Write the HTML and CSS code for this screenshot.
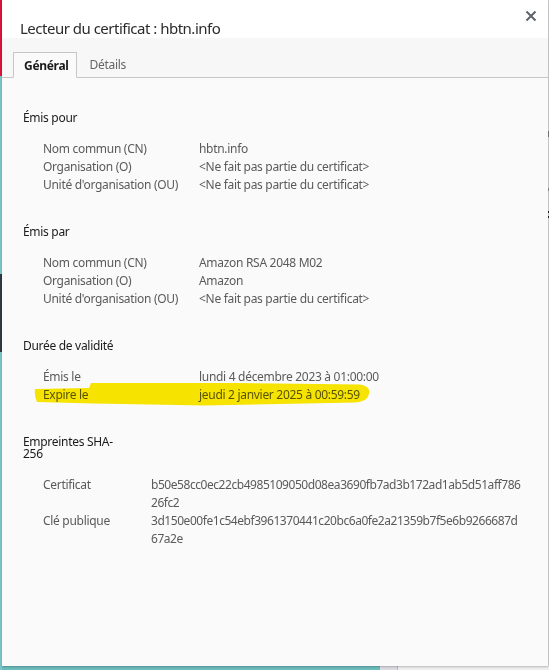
FILE: index.html
```html
<!DOCTYPE html>
<html lang="fr">
<head>
<meta charset="utf-8">
<title>Lecteur du certificat</title>
<link rel="stylesheet" href="styles.css">
</head>
<body>
<div class="backdrop">
  <div class="dialog">
    <header class="titlebar">
      <h1 class="title">Lecteur du certificat : hbtn.info</h1>
      <button class="close" aria-label="Fermer">
        <svg width="12" height="12" viewBox="0 0 12 12"><path d="M1.5 1.5 L10.5 10.5 M10.5 1.5 L1.5 10.5" stroke="#5f6368" stroke-width="2" fill="none"/></svg>
      </button>
    </header>
    <nav class="tabs">
      <span class="tab tab-active">Général</span>
      <span class="tab">Détails</span>
      <span class="tab-fill"></span>
    </nav>
    <main class="content">
      <section class="group">
        <h2 class="heading">Émis pour</h2>
        <div class="fields">
          <span class="label">Nom commun (CN)</span><span class="value">hbtn.info</span>
          <span class="label">Organisation (O)</span><span class="value">&lt;Ne fait pas partie du certificat&gt;</span>
          <span class="label">Unité d'organisation (OU)</span><span class="value">&lt;Ne fait pas partie du certificat&gt;</span>
        </div>
      </section>
      <section class="group">
        <h2 class="heading">Émis par</h2>
        <div class="fields">
          <span class="label">Nom commun (CN)</span><span class="value">Amazon RSA 2048 M02</span>
          <span class="label">Organisation (O)</span><span class="value">Amazon</span>
          <span class="label">Unité d'organisation (OU)</span><span class="value">&lt;Ne fait pas partie du certificat&gt;</span>
        </div>
      </section>
      <section class="group">
        <h2 class="heading">Durée de validité</h2>
        <div class="fields marked">
          <span class="label">Émis le</span><span class="value">lundi 4 décembre 2023 à 01:00:00</span>
          <span class="label">Expire le</span><span class="value">jeudi 2 janvier 2025 à 00:59:59</span>
          <svg class="highlight" width="338" height="26" viewBox="0 0 338 26"><path d="M1 8 L55 7 L57 2 L200 2 L326 3.5 Q337 5 335 13 Q333 21 321 21.5 L170 24.5 L60 22.5 L3 21 Q0 15 1 8 Z" fill="#fbe900"/></svg>
        </div>
      </section>
      <section class="group">
        <h2 class="heading heading-wrap">Empreintes SHA-<br>256</h2>
        <div class="fields fields-hash">
          <span class="label">Certificat</span><span class="value hash">b50e58cc0ec22cb4985109050d08ea3690fb7ad3b172ad1ab5d51aff786<br>26fc2</span>
          <span class="label">Clé publique</span><span class="value hash">3d150e00fe1c54ebf3961370441c20bc6a0fe2a21359b7f5e6b9266687d<br>67a2e</span>
        </div>
      </section>
    </main>
  </div>
</div>
</body>
</html>
```

FILE: styles.css
```css
* { box-sizing: border-box; }
html, body { margin: 0; padding: 0; }
body {
  width: 549px;
  height: 670px;
  overflow: hidden;
  font-family: "Segoe UI", "Noto Sans", sans-serif;
  font-size: 12px;
  letter-spacing: -0.3px;
  background: #ececec;
}
.backdrop {
  width: 549px;
  height: 670px;
  padding: 0 1px 4px 2px;
  background:
    linear-gradient(#d8143f, #d8143f) 0 0 / 2px 76px no-repeat,
    linear-gradient(#2f3a44, #2f3a44) 0 274px / 2px 78px no-repeat,
    linear-gradient(#7cc7c9, #7cc7c9) 0 76px / 2px 100% no-repeat,
    linear-gradient(#6dbcbd, #6dbcbd) 0 666px / 380px 4px no-repeat,
    linear-gradient(#dcdce4, #dcdce4) 380px 666px / 17px 4px no-repeat,
    linear-gradient(#b8b8c8, #b8b8c8) 397px 666px / 1px 4px no-repeat,
    linear-gradient(#8a8a8a, #8a8a8a) 548px 131px / 1px 6px no-repeat,
    linear-gradient(#9a9a9a, #9a9a9a) 548px 188px / 1px 3px no-repeat,
    linear-gradient(#222, #222) 548px 211px / 1px 2px no-repeat,
    linear-gradient(#222, #222) 548px 216px / 1px 2px no-repeat,
    #efefef;
}
.dialog {
  width: 546px;
  height: 666px;
  display: flex;
  flex-direction: column;
  background: #fafafa;
  box-shadow: 0 1px 2px rgba(0,0,0,0.22), 1px 0 1px rgba(0,0,0,0.12);
}
.titlebar {
  height: 38px;
  flex: none;
  background: #ffffff;
  display: flex;
  align-items: flex-start;
  justify-content: space-between;
  padding: 0 10px 0 18px;
}
.title {
  margin: 18px 0 0;
  font-size: 15px;
  letter-spacing: -0.5px;
  font-weight: normal;
  color: #2b2b2b;
  line-height: 20px;
}
.close {
  margin-top: 9px;
  width: 14px;
  height: 14px;
  padding: 1px;
  border: 0;
  background: transparent;
  display: flex;
}
.tabs {
  height: 40px;
  flex: none;
  background: #f7f7f7;
  display: flex;
  align-items: flex-end;
  padding-top: 14px;
}
.tab {
  height: 26px;
  line-height: 24px;
  padding: 1px 12px 0 13px;
  color: #666666;
  border-bottom: 1px solid #c6c6c6;
}
.tabs::before {
  content: "";
  width: 11px;
  height: 26px;
  border-bottom: 1px solid #c6c6c6;
}
.tab-active {
  color: #1a1a1a;
  font-weight: bold;
  background: #fafafa;
  border: 1px solid #c6c6c6;
  border-bottom-color: transparent;
  padding: 1px 7px 0 10px;
}
.tab-fill {
  flex: 1;
  height: 26px;
  border-bottom: 1px solid #c6c6c6;
}
.content {
  flex: 1;
  padding: 31px 20px 0 21px;
}
.group {
  margin-bottom: 29px;
}
.heading {
  margin: 0 0 13px;
  font-size: 12px;
  font-weight: normal;
  line-height: 18px;
  color: #1a1a1a;
}
.heading-wrap {
  line-height: 12px;
  padding: 3px 0 3px;
}
.fields {
  position: relative;
  display: grid;
  grid-template-columns: 156px auto;
  line-height: 18px;
  padding-left: 20px;
  color: #5a5a5a;
}
.fields-hash {
  grid-template-columns: 108px auto;
}
.label, .value {
  white-space: nowrap;
}
.hash {
  letter-spacing: -0.45px;
}
.highlight {
  position: absolute;
  left: 11px;
  top: 13px;
  mix-blend-mode: multiply;
  pointer-events: none;
}
```
